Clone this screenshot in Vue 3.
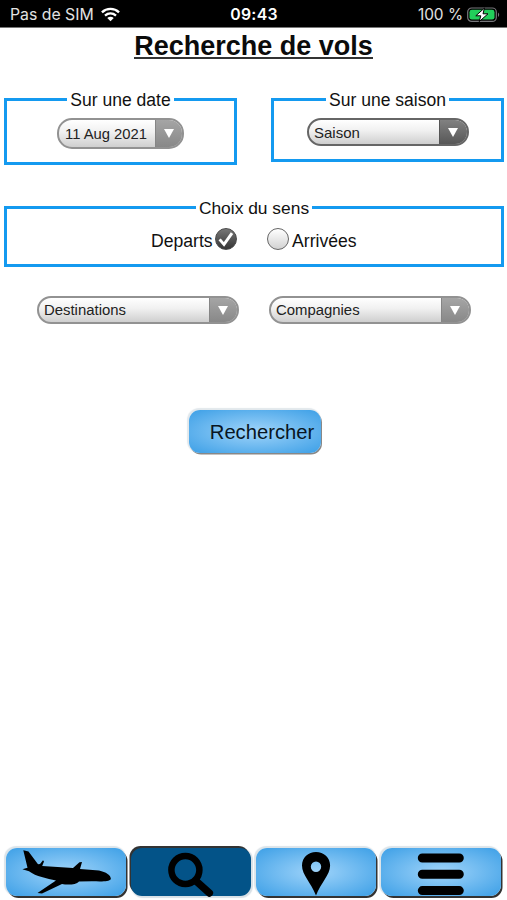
<script setup>
import { ref } from 'vue'

const direction = ref('departs')
const tab = ref('search')
</script>

<template>
  <div class="screen">
    <header class="status">
      <div class="carrier">
        <span class="sim">Pas de SIM</span>
        <svg class="wifi" width="19" height="15" viewBox="0 0 20 15">
          <g fill="none" stroke="#fff" stroke-width="2.5">
            <path d="M1 5.2C6 .4 14 .4 19 5.2" />
            <path d="M4.2 8.7c3.4-3 8.2-3 11.6 0" />
          </g>
          <path d="M6.6 11.2c2-1.7 4.8-1.7 6.8 0L10 14.7z" fill="#fff" />
        </svg>
      </div>
      <span class="clock">09:43</span>
      <div class="power">
        <span class="level">100 %</span>
        <svg class="battery" width="33" height="16" viewBox="0 0 33 16">
          <rect x=".7" y="1" width="28.6" height="13.4" rx="4" fill="none" stroke="#77777b" stroke-width="1.2" />
          <path d="M31 5.6c1.6.8 1.6 3.6 0 4.4z" fill="#77777b" />
          <rect x="2.5" y="2.8" width="25" height="9.8" rx="2.4" fill="#22cf5b" />
          <path d="M17.5 1 8.8 8.8h5L12.2 14.6 21 6.8h-5z" fill="#fff" stroke="#000" stroke-width="1" />
        </svg>
      </div>
    </header>

    <h1 class="title"><span>Recherche de vols</span></h1>

    <main>
      <div class="criteria">
        <fieldset class="box date">
          <legend>Sur une date</legend>
          <button class="select">
            <span class="value">11 Aug 2021</span>
            <span class="arrow"><svg width="12" height="11" viewBox="0 0 12 11"><path d="M1 1h10L6 10z" fill="#fff" /></svg></span>
          </button>
        </fieldset>
        <fieldset class="box season">
          <legend>Sur une saison</legend>
          <button class="select dark">
            <span class="value">Saison</span>
            <span class="arrow"><svg width="12" height="11" viewBox="0 0 12 11"><path d="M1 1h10L6 10z" fill="#fff" /></svg></span>
          </button>
        </fieldset>
      </div>

      <fieldset class="box way">
        <legend>Choix du sens</legend>
        <div class="options">
          <label class="departs" @click="direction = 'departs'">
            <span class="text">Departs</span>
            <span class="radio" :class="{ on: direction === 'departs' }">
              <svg v-if="direction === 'departs'" width="20" height="20" viewBox="0 0 20 20"><path d="M3.6 10.4 8 15.4 16 4.2" fill="none" stroke="#fff" stroke-width="2.9" /></svg>
            </span>
          </label>
          <label class="arrivals" @click="direction = 'arrivees'">
            <span class="radio" :class="{ on: direction === 'arrivees' }">
              <svg v-if="direction === 'arrivees'" width="20" height="20" viewBox="0 0 20 20"><path d="M3.6 10.4 8 15.4 16 4.2" fill="none" stroke="#fff" stroke-width="2.9" /></svg>
            </span>
            <span class="text">Arrivées</span>
          </label>
        </div>
      </fieldset>

      <div class="filters">
        <button v-for="name in ['Destinations', 'Compagnies']" :key="name" class="select">
          <span class="value">{{ name }}</span>
          <span class="arrow"><svg width="12" height="11" viewBox="0 0 12 11"><path d="M1 1h10L6 10z" fill="#fff" /></svg></span>
        </button>
      </div>

      <button class="search"><span>Rechercher</span></button>
    </main>

    <nav class="tabs">
      <button class="tab" :class="{ active: tab === 'flights' }" @click="tab = 'flights'">
        <svg width="120" height="48" viewBox="0 0 120 48">
          <path d="M17.3 2.3 22.5 3.5 32 16.3 34 15.9 37 12.3 38 13.4 36.2 17.9 67 20 73.5 14.2 76 14 74 21 93 22.5C100 24 105 27.3 104.9 31 103 33.8 96 33.6 86 33.3L73 33.4C70 37 61 36.8 56 35.9L36 45.5 31.5 45 50 32.4C41 30.4 30 28.6 23 23.2L16.4 21.2 21.5 19.8z" fill="#000" />
        </svg>
      </button>
      <button class="tab" :class="{ active: tab === 'search' }" @click="tab = 'search'">
        <svg width="120" height="48" viewBox="0 0 120 48">
          <circle cx="54.4" cy="22" r="14" fill="none" stroke="#000" stroke-width="6.5" />
          <path d="M65 33 78.4 45" stroke="#000" stroke-width="7.4" stroke-linecap="round" />
        </svg>
      </button>
      <button class="tab" :class="{ active: tab === 'map' }" @click="tab = 'map'">
        <svg width="120" height="48" viewBox="0 0 120 48">
          <path d="M60 4C52.2 4 46 9.6 46 17.6c0 9.5 9.2 17.4 14 30 4.8-12.6 14.1-20.5 14.1-30C74.1 9.6 67.8 4 60 4zm0 9.5a5.2 5.2 0 1 1 0 10.4 5.2 5.2 0 0 1 0-10.4z" fill="#000" fill-rule="evenodd" />
        </svg>
      </button>
      <button class="tab" :class="{ active: tab === 'menu' }" @click="tab = 'menu'">
        <svg width="120" height="48" viewBox="0 0 120 48">
          <path d="M41.3 10h37M41.3 26.3h37M41.3 42.6h37" stroke="#000" stroke-width="9" stroke-linecap="round" />
        </svg>
      </button>
    </nav>
  </div>
</template>

<style>
body {
  margin: 0;
  background: #fff;
}
</style>

<style scoped>
* {
  box-sizing: border-box;
}

.screen {
  display: flex;
  flex-direction: column;
  width: 507px;
  height: 900px;
  overflow: hidden;
  background: #fff;
  color: #111;
  font-family: "Liberation Sans", Arial, sans-serif;
}

button {
  margin: 0;
  padding: 0;
  border: 0;
  background: none;
  color: inherit;
  font: inherit;
}

svg {
  display: block;
  flex: none;
  overflow: visible;
}

.status {
  display: grid;
  grid-template-columns: 1fr auto 1fr;
  align-items: center;
  height: 28px;
  flex: none;
  padding: 2px 7px 0 10px;
  border-bottom: 1px solid #777;
  background: #000;
  color: #e2e2e2;
  font-family: Inter, sans-serif;
  font-size: 15.8px;
  white-space: nowrap;
}

.carrier,
.power {
  display: flex;
  align-items: center;
}

.carrier {
  gap: 7px;
}

.power {
  justify-content: flex-end;
  gap: 4px;
}

.level {
  font-size: 15.4px;
}

.clock {
  margin-right: 2px;
  color: #fff;
  font-weight: 600;
  letter-spacing: 0.3px;
}

.title {
  height: 36px;
  margin: 0;
  padding: 2px 0 0;
  text-align: center;
  font-size: 27px;
  line-height: 32px;
  color: #0b0b0b;
}

.title span {
  display: inline-block;
  height: 29px;
  border-bottom: 2px solid #333;
}

main {
  flex: 1;
  display: flex;
  flex-direction: column;
}

.criteria {
  display: flex;
  justify-content: space-between;
  align-items: flex-start;
  margin: 26px 3px 0 4px;
}

.box {
  min-width: 0;
  margin: 0;
  padding: 0;
  border: 3px solid #149af0;
}

.box legend {
  height: 19px;
  margin: 0 auto;
  padding: 0 3px 0 3px;
  font-size: 17.55px;
  line-height: 20px;
  white-space: nowrap;
}

.date {
  width: 233px;
  height: 75px;
}

.season {
  width: 233px;
  height: 72px;
}

.select {
  display: flex;
  height: 28px;
  overflow: hidden;
  border: 2px solid #929292;
  border-radius: 15px;
  background: linear-gradient(#fff, #f0f0f0 45%, #cfcfcf);
  font-size: 15px;
  color: #222;
  text-align: left;
}

.value {
  flex: 1;
  align-self: center;
  padding-left: 6px;
  white-space: nowrap;
}

.arrow {
  display: flex;
  justify-content: center;
  align-items: center;
  align-self: stretch;
  width: 28px;
  padding-right: 1px;
  border-left: 1px solid #858585;
  background: linear-gradient(#a5a5a5, #888);
}

.date .select {
  width: 127px;
  height: 31px;
  margin: 9px 0 0 50px;
}

.date .value {
  font-size: 14.8px;
}

.date .arrow {
  width: 27px;
}

.season .select {
  width: 162px;
  margin: 9px 0 0 32.5px;
}

.season .value {
  padding-left: 5.5px;
}

.dark {
  border-color: #666;
}

.dark .arrow {
  border-color: #555;
  background: linear-gradient(#818181, #575757);
}

.way {
  width: 500px;
  height: 69px;
  margin: 33px 0 0 4px;
}

.way legend {
  font-size: 17.4px;
}

.options {
  display: flex;
  gap: 30px;
  padding: 8px 0 0 144px;
  font-size: 17.6px;
}

.options label {
  display: flex;
  align-items: center;
}

.departs {
  gap: 2px;
}

.arrivals {
  gap: 3.5px;
}

.options .text {
  padding-top: 6px;
}

.radio {
  width: 22px;
  height: 22px;
  border: 1.5px solid #666;
  border-radius: 50%;
  background: linear-gradient(#fff, #d2d2d2);
}

.radio.on {
  border-color: #4a4a4a;
  background: linear-gradient(#777, #353535);
}

.filters {
  display: flex;
  gap: 30px;
  margin: 29px 0 0 36.5px;
}

.filters .select {
  width: 202px;
}

.filters .value {
  padding-left: 5.5px;
  font-size: 14.9px;
}

.search {
  width: 132px;
  height: 43px;
  margin: 86px 0 0 189px;
  padding: 2px 0 0 14px;
  border-radius: 11px;
  background: radial-gradient(ellipse at center, #a0d4fa, #3c9fe6);
  box-shadow: 1px 1.5px 0 #888, -1px -1px 1px 1px #e2e8ec;
  font-size: 20.2px;
  color: #081522;
}

.tabs {
  display: flex;
  height: 54px;
  flex: none;
  gap: 5px;
  padding: 2px 4px 0 6px;
}

.tab {
  width: 120px;
  height: 48px;
  border-radius: 11px;
  background: radial-gradient(ellipse at center, #a0d4fa, #3c9fe6);
  box-shadow: 1.5px 2px 0 #333, -1px -1px 1px 1px #dce4e9;
}

.tab.active {
  background: #035388;
  box-shadow: -1.5px -2px 0 #333, 1px 1px 1px 1px #d8e0e6;
}
</style>
